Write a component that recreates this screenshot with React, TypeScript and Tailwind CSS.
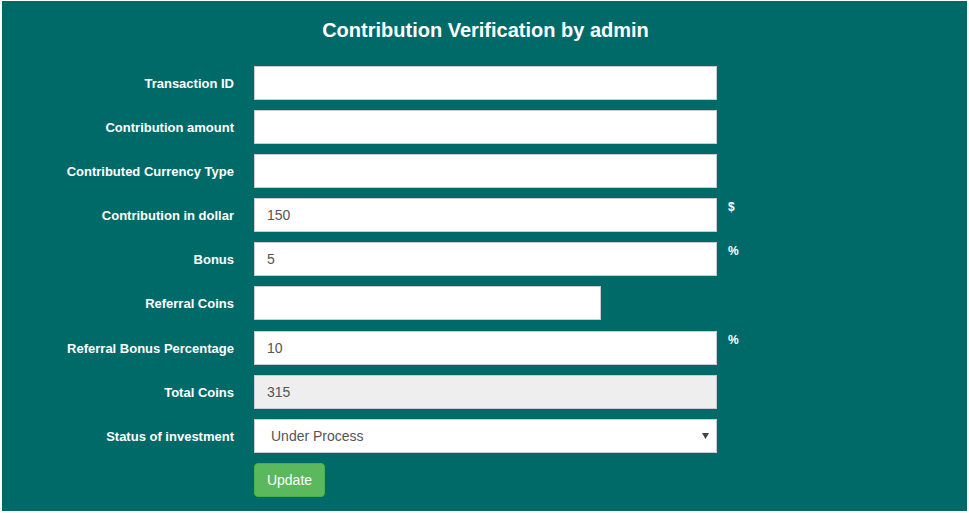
import React from "react";

const font = { fontFamily: '"Liberation Sans", Arial, sans-serif' };

function Row({
  label,
  children,
  suffix,
  className = "",
}: {
  label: string;
  children: React.ReactNode;
  suffix?: string;
  className?: string;
}) {
  return (
    <div className={`flex items-start ${className}`}>
      <div className="w-[232px] h-[34px] pt-[2px] flex items-center justify-end text-[13px] font-bold text-white leading-[18px]">
        {label}
      </div>
      <div className="ml-[20px] w-[463px]">{children}</div>
      {suffix && (
        <div className="ml-[11px] text-[12px] font-bold text-white leading-[16px] pt-[1px]">
          {suffix}
        </div>
      )}
    </div>
  );
}

const inputCls =
  "block h-[34px] border border-[#cccccc] bg-white px-[12px] text-[14px] text-[#555555] outline-none";

export default function App() {
  return (
    <div className="bg-white pt-[1px] px-[2px] pb-[2px]" style={font}>
      <div className="bg-[#006a69] h-[510px] pt-[17px]">
        <h3 className="text-center text-white font-bold text-[20px] leading-[24px] pl-[2px]">
          Contribution Verification by admin
        </h3>
        <div className="mt-[24px] flex flex-col">
          <Row label="Transaction ID">
            <input className={`${inputCls} w-full`} defaultValue="" />
          </Row>
          <Row label="Contribution amount" className="mt-[10px]">
            <input className={`${inputCls} w-full`} defaultValue="" />
          </Row>
          <Row label="Contributed Currency Type" className="mt-[10px]">
            <input className={`${inputCls} w-full`} defaultValue="" />
          </Row>
          <Row label="Contribution in dollar" suffix="$" className="mt-[10px]">
            <input className={`${inputCls} w-full`} defaultValue="150" />
          </Row>
          <Row label="Bonus" suffix="%" className="mt-[10px]">
            <input className={`${inputCls} w-full`} defaultValue="5" />
          </Row>
          <Row label="Referral Coins" className="mt-[10px]">
            <input className={`${inputCls} w-[347px]`} defaultValue="" />
          </Row>
          <Row label="Referral Bonus Percentage" suffix="%" className="mt-[11px]">
            <input className={`${inputCls} w-full`} defaultValue="10" />
          </Row>
          <Row label="Total Coins" className="mt-[10px]">
            <input
              className={`${inputCls} w-full !bg-[#eeeeee]`}
              defaultValue="315"
              readOnly
            />
          </Row>
          <Row label="Status of investment" className="mt-[10px]">
            <div className="relative">
              <select
                className={`${inputCls} w-full appearance-none pl-[16px]`}
                defaultValue="Under Process"
                style={font}
              >
                <option>Under Process</option>
                <option>Approved</option>
                <option>Rejected</option>
              </select>
              <svg
                className="absolute right-[8px] top-[14px] pointer-events-none"
                width="7"
                height="6"
                viewBox="0 0 7 6"
              >
                <path d="M0 0 H7 L3.5 6 Z" fill="#444444" />
              </svg>
            </div>
          </Row>
          <div className="flex mt-[10px]">
            <div className="w-[232px]" />
            <button className="ml-[20px] h-[34px] w-[71px] rounded-[4px] border border-[#4cae4c] bg-[#5cb85c] text-white text-[14px]">
              Update
            </button>
          </div>
        </div>
      </div>
    </div>
  );
}
